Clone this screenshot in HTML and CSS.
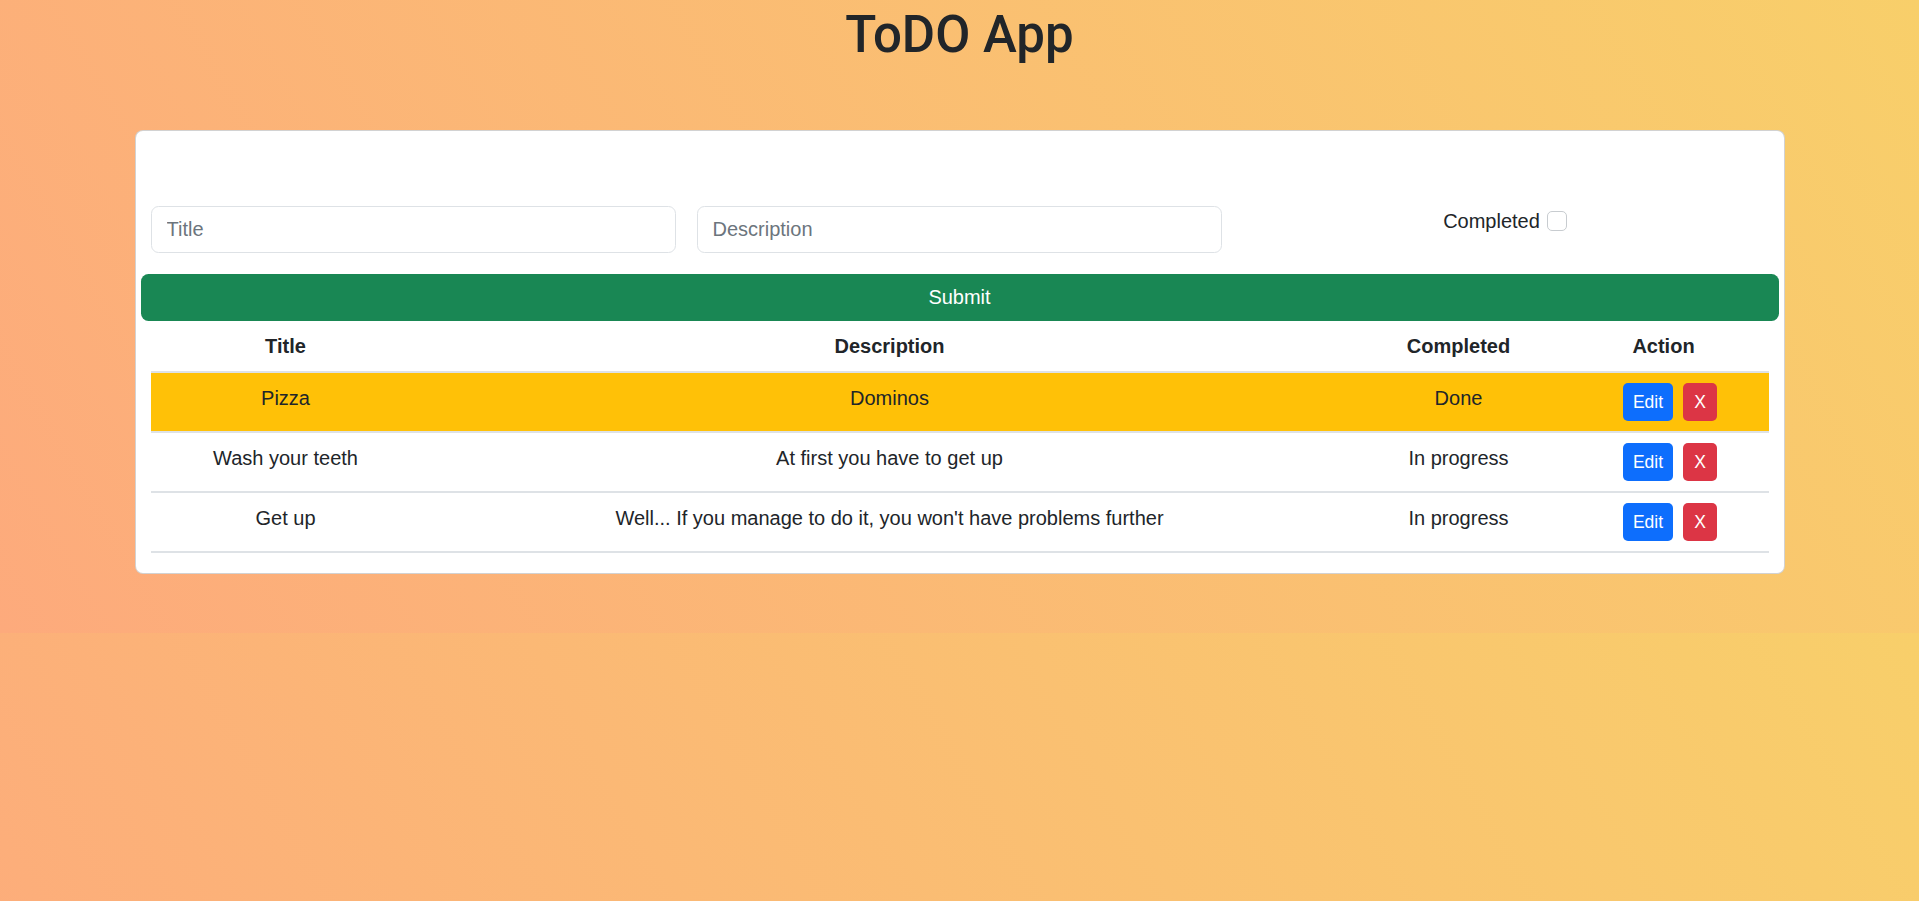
FILE: index.html
```html
<!DOCTYPE html>
<html lang="en">
<head>
<meta charset="utf-8">
<title>ToDO App</title>
<link rel="stylesheet" href="styles.css">
</head>
<body>
<h1 class="app-title">ToDO App</h1>
<div class="card">
  <form class="todo-form">
    <div class="form-grid">
      <input class="form-control" type="text" placeholder="Title">
      <input class="form-control" type="text" placeholder="Description">
      <div class="check-col">
        <label class="check-label" for="completed">Completed</label><input class="check-input" id="completed" type="checkbox">
      </div>
    </div>
    <button class="btn-submit" type="button">Submit</button>
  </form>
  <table class="todo-table">
    <colgroup>
      <col class="c-title"><col class="c-desc"><col class="c-done"><col class="c-action">
    </colgroup>
    <thead>
      <tr><th>Title</th><th>Description</th><th>Completed</th><th>Action</th></tr>
    </thead>
    <tbody>
      <tr class="row-done">
        <td>Pizza</td><td>Dominos</td><td>Done</td>
        <td><div class="actions"><button class="btn btn-edit" type="button">Edit</button><button class="btn btn-del" type="button">X</button></div></td>
      </tr>
      <tr>
        <td>Wash your teeth</td><td>At first you have to get up</td><td>In progress</td>
        <td><div class="actions"><button class="btn btn-edit" type="button">Edit</button><button class="btn btn-del" type="button">X</button></div></td>
      </tr>
      <tr>
        <td>Get up</td><td>Well... If you manage to do it, you won't have problems further</td><td>In progress</td>
        <td><div class="actions"><button class="btn btn-edit" type="button">Edit</button><button class="btn btn-del" type="button">X</button></div></td>
      </tr>
    </tbody>
  </table>
</div>
</body>
</html>
```

FILE: styles.css
```css
* { box-sizing: border-box; }

body {
  margin: 0;
  font-family: "Liberation Sans", Arial, sans-serif;
  font-size: 20px;
  line-height: 1.5;
  color: #212529;
  background: linear-gradient(60deg, #fdaa7c 0%, #f8cf6a 100%);
}

.app-title {
  margin: 0;
  padding-top: 5px;
  height: 65px;
  line-height: 60px;
  text-align: center;
  font-family: Roboto, "Noto Sans", sans-serif;
  font-weight: 500;
  font-size: 51px;
  color: #212529;
}

.card {
  width: 1650px;
  margin: 65px auto 59px;
  background: #fff;
  border: 1px solid rgba(0, 0, 0, 0.175);
  border-radius: 8px;
  padding: 75px 5px 20px;
}

.form-grid {
  display: grid;
  grid-template-columns: 525px 525px 525px;
  column-gap: 21px;
  padding: 0 10px;
}

.form-control {
  height: 47px;
  width: 100%;
  border: 1px solid #dee2e6;
  border-radius: 7.5px;
  padding: 0 15px;
  font-family: "Liberation Sans", Arial, sans-serif;
  font-size: 20px;
  color: #212529;
  background: #fff;
  outline: none;
}

.form-control::placeholder { color: #6c757d; }

.check-col {
  text-align: center;
  line-height: 30px;
}

.check-label { color: #212529; }

.check-input {
  appearance: none;
  -webkit-appearance: none;
  display: inline-block;
  vertical-align: top;
  width: 20px;
  height: 20px;
  margin: 5px 0 0 7px;
  border: 1px solid #c8ccd0;
  border-radius: 5px;
  background: #fff;
}

.btn-submit {
  display: block;
  width: 100%;
  height: 47px;
  margin-top: 21px;
  border: none;
  border-radius: 7.5px;
  background: #198754;
  color: #fff;
  font-family: "Liberation Sans", Arial, sans-serif;
  font-size: 20px;
}

.todo-table {
  width: 1618px;
  margin: 0 10px;
  border-collapse: collapse;
  table-layout: fixed;
}

.c-title { width: 270px; }
.c-desc { width: 938px; }
.c-done { width: 200px; }
.c-action { width: 210px; }

.todo-table th,
.todo-table td {
  padding: 10px;
  text-align: center;
  vertical-align: top;
  line-height: 30px;
  border-bottom: 2px solid #dee2e6;
}

.todo-table th { font-weight: bold; }

.row-done td { background: #ffc107; }

.actions {
  display: flex;
  justify-content: center;
  gap: 10px;
  margin-left: 13px;
}

.btn {
  height: 38px;
  padding: 0 10px;
  border: none;
  border-radius: 5px;
  color: #fff;
  font-family: "Liberation Sans", Arial, sans-serif;
  font-size: 17.5px;
  line-height: 38px;
}

.btn-edit { background: #0d6efd; }
.btn-del { background: #dc3545; width: 34px; padding: 0; }
```
